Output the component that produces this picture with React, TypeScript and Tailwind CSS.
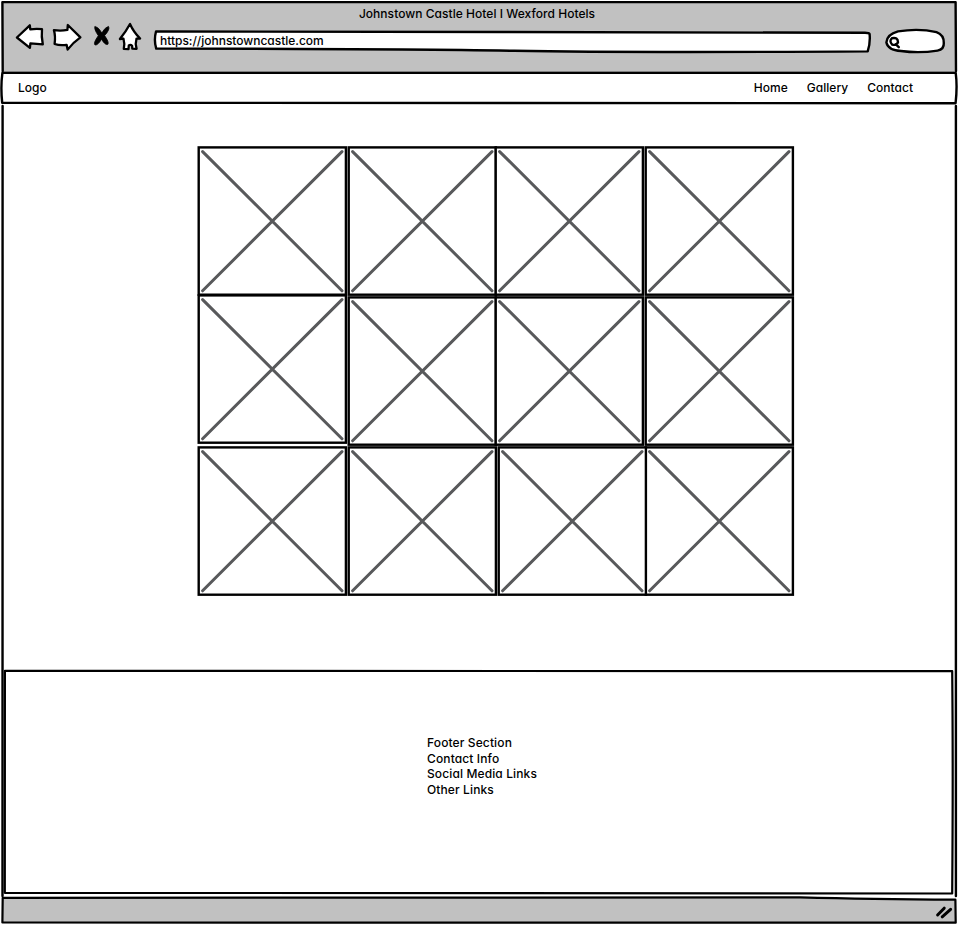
import type { ReactNode } from "react";

type OutlineProps = { d: string; fill?: string; width?: number };

/** Hand-drawn outline that decorates the panel it sits in. */
function Outline({ d, fill = "none", width = 2.4 }: OutlineProps) {
  return (
    <svg
      className="pointer-events-none absolute left-0 top-0 h-full w-full overflow-visible"
      fill={fill}
      stroke="#000"
      strokeWidth={width}
      strokeLinejoin="round"
      strokeLinecap="round"
      aria-hidden="true"
    >
      <path d={d} />
    </svg>
  );
}

function Label({ children, className = "" }: { children: ReactNode; className?: string }) {
  return <span className={`relative block whitespace-nowrap ${className}`}>{children}</span>;
}

function ToolbarIcons() {
  return (
    <svg
      className="block h-[32px] w-[128px] shrink-0 overflow-visible"
      viewBox="15 21 128 32"
      fill="#fff"
      stroke="#000"
      strokeWidth="2.3"
      strokeLinejoin="round"
      strokeLinecap="round"
      aria-hidden="true"
    >
      <path d="M16.9 37.5 29.8 25.3 30.3 29.4Q36 28.4 42 29.2Q41.2 36.5 42.8 44.3L30.4 43.4 29.9 47.8Z" />
      <path d="M80.4 37.4 67.8 25 67.4 29.8Q61 31.2 53.9 30.1Q55.7 36 54.6 44Q60 45.8 66.6 44.8L67.6 49.6Q72.5 43 80.4 37.4Z" />
      <path d="M95 26.8Q98 26.4 101.8 33Q104.8 27.4 108.5 26.4Q110.4 29.2 104.6 35.6Q109.6 42.8 107.7 44.4Q105.2 45.4 101.5 39.2Q98 45.3 95 45Q93 43.2 98.3 35.7Q93.6 28.7 95 26.8Z" fill="#000" strokeWidth=".8" />
      <path d="M130 24Q126 31.4 119.9 39L123.5 38.7Q124.9 43.5 123.8 48.8L128.5 49.1 128.8 45.5Q130.5 44.1 132.1 45.8L132.3 48.7 136.6 48.8Q135 43.4 136.5 38.6L140.1 38.5Q133.5 32 130 24Z" />
    </svg>
  );
}

function ImagePlaceholder({ className = "" }: { className?: string }) {
  return (
    <svg
      className={`block h-[150px] w-[150px] overflow-visible ${className}`}
      viewBox="0 0 150 150"
      fill="none"
      role="img"
      aria-label="Image"
    >
      <rect x="1.7" y="1.4" width="147.2" height="147.3" fill="#fff" stroke="#000" strokeWidth="2.4" />
      <path d="M5.6 5.6 145 144.8M145 5.6 5.6 144.8" stroke="#58595b" strokeWidth="3" strokeLinecap="round" />
    </svg>
  );
}

const tiles = ["", "", "", "", "-translate-y-[2px]", "", "", "", "", "", "translate-x-[3px]", ""];
const footerLines = ["Footer Section", "Contact Info", "Social Media Links", "Other Links"];

export default function App() {
  return (
    <div className="relative flex h-[925px] w-[958px] flex-col overflow-hidden bg-white font-['Inter','Liberation_Sans',sans-serif] text-[12px] font-medium leading-[16px] tracking-[0.02px] text-black [font-feature-settings:'cv11']">
      <header className="relative flex h-[72px] shrink-0 flex-col">
        <Outline d="M2.7 71 2.4 2.1Q480 1.5 955.6 2.1L956 71" fill="#c1c1c1" />
        <div className="flex h-[21px] justify-center pr-[4px] pt-[6px]">
          <Label className="tracking-[0.04px]">Johnstown Castle Hotel I Wexford Hotels</Label>
        </div>
        <div className="relative flex h-[32px] items-start pl-[15px]">
          <ToolbarIcons />
          <div className="relative ml-[11px] mt-[10px] flex h-[22px] w-[717px] items-start pl-[6px] pt-[2px]">
            <Outline d="M2 .5Q-.3 9 2.2 17.6Q250 17.8 360 19.8T713.7 20.4Q716.5 12 715.6 3Q715 1.8 711 1.8Q500 1 350 1T2 .5Z" fill="#fff" />
            <Label className="tracking-[-0.02px]">https://johnstowncastle.com</Label>
          </div>
          <div className="relative ml-[14px] mt-[8px] h-[24px] w-[60px]">
            <Outline d="M13 2.4Q34-1 51.5 3.2Q59 6 58.8 14Q59.2 20.5 52.5 21.6Q34 24.5 16 22Q3 21 1.4 13.4Q2 5.3 13 2.4Z" fill="#fff" />
            <Outline d="M7 9.2Q12.8 8 13 13.2Q11.5 16.8 7.2 15.6Q3.8 12.2 7 9.2M10.6 15.2 13.8 18.2" width={2.4} />
          </div>
        </div>
      </header>

      <nav className="relative flex h-[32px] shrink-0 items-center justify-between pl-[18px] pr-[45px]">
        <Outline d="M2.4.8Q.5 15 2.2 30.8Q480 31.5 955.6 31.2Q957.5 14 955.7.8Q480-.5 2.4.8Z" fill="#fff" />
        <Label>Logo</Label>
        <div className="flex gap-[19px]">
          <Label>Home</Label>
          <Label>Gallery</Label>
          <Label>Contact</Label>
        </div>
      </nav>

      <div className="relative flex h-[792px] shrink-0 flex-col">
        <Outline d="M2.6 2Q1.8 550 2.5 792M955.9 2Q956.6 500 955.9 792" />
        <main className="flex h-[565px] shrink-0 pl-[197px] pt-[42px]">
          <div className="grid h-[450px] grid-cols-[150px_147px_150px_150px] grid-rows-[150px_150px_150px]">
            {tiles.map((offset, i) => (
              <ImagePlaceholder key={i} className={offset} />
            ))}
          </div>
        </main>
        <footer className="relative ml-[4px] mt-[1px] flex h-[224px] w-[950px] flex-col pl-[423px] pt-[65px] tracking-[0.12px]">
          <Outline d="M.9.9Q480 .2 948.2 1.1Q949.2 100 948.2 223.5Q480 222.4 .8 222.8Q.4 110 .9.9Z" fill="#fff" width={2.2} />
          {footerLines.map((line) => (
            <Label key={line} className="h-[15.7px]">
              {line}
            </Label>
          ))}
        </footer>
      </div>

      <div className="relative h-[28px] shrink-0">
        <Outline d="M2.7 1.8Q480 1 800 1.4Q870 3.2 955.4 3.7L955.7 26.7Q480 27.4 2.4 26.5Z" fill="#c1c1c1" width={2.2} />
        <Outline d="M937.6 19 944.2 12.2M942.2 20.8 950.6 13.3" width={3} />
      </div>
    </div>
  );
}
